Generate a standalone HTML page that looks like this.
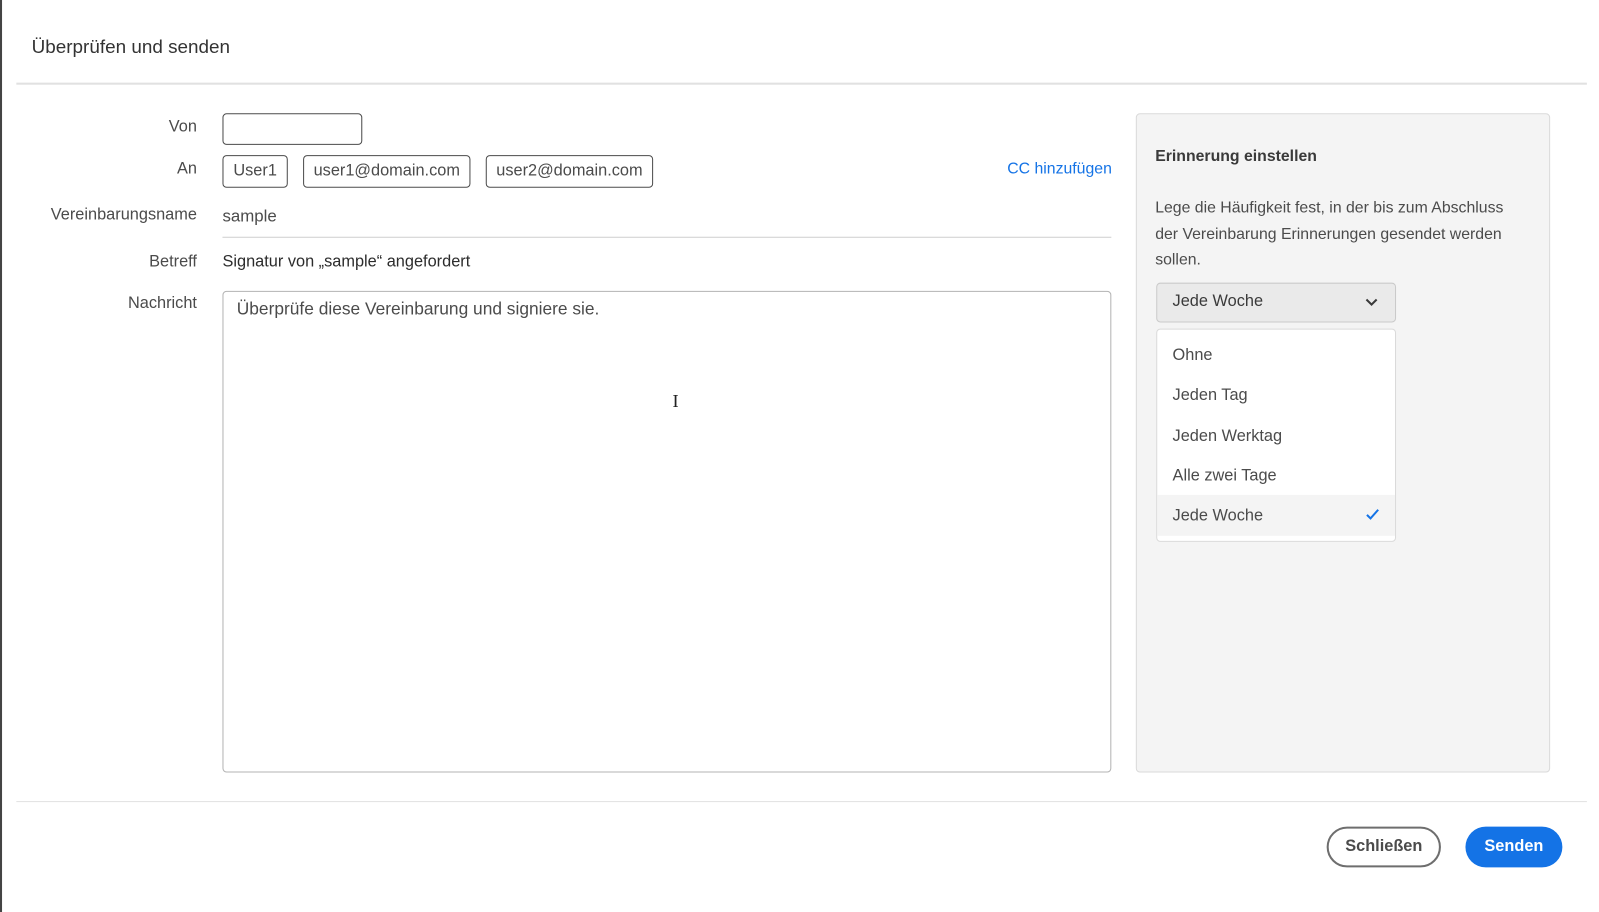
<!DOCTYPE html>
<html><head><meta charset="utf-8"><style>
*{box-sizing:border-box;margin:0;padding:0}
body{width:1599px;height:894px;background:#fff;font-family:"Liberation Sans",sans-serif;color:#4b4b4b;position:relative;overflow:hidden}
#w{position:absolute;left:0;top:0;width:1567px;height:876px;transform:scale(1.0205);transform-origin:0 0}
.a{position:absolute}
.lbl{position:absolute;right:1374px;font-size:16px;color:#4b4b4b;white-space:nowrap}
.chip{position:absolute;top:152px;height:32px;border:1px solid #4b4b4b;border-radius:4px;font-size:16px;line-height:30px;text-align:center;color:#4b4b4b}
.opt{position:absolute;left:15px;font-size:16px;color:#4b4b4b}
</style></head><body><div id="w">
<div class="a" style="left:0;top:0;width:2px;height:894px;background:#444"></div>
<div class="a" style="left:31px;top:35px;font-size:18.5px;color:#333">Überprüfen und senden</div>
<div class="a" style="left:16px;top:81px;width:1539px;height:2px;background:#e1e1e1"></div>

<div class="lbl" style="top:116px">Von</div>
<div class="a" style="left:218px;top:111px;width:137px;height:31px;border:1px solid #4b4b4b;border-radius:4px"></div>
<div class="lbl" style="top:157px">An</div>
<div class="chip" style="left:218px;width:64px">User1</div>
<div class="chip" style="left:297px;width:164px">user1@domain.com</div>
<div class="chip" style="left:476px;width:164px">user2@domain.com</div>
<div class="a" style="left:987px;top:157px;font-size:15.5px;color:#1473e6">CC hinzufügen</div>
<div class="lbl" style="top:202px">Vereinbarungsname</div>
<div class="a" style="left:218px;top:203px;font-size:16.5px;color:#4b4b4b">sample</div>
<div class="a" style="left:218px;top:232px;width:871px;height:1px;background:#cfcfcf"></div>
<div class="lbl" style="top:248px">Betreff</div>
<div class="a" style="left:218px;top:248px;font-size:16px;color:#2c2c2c">Signatur von „sample“ angefordert</div>
<div class="lbl" style="top:289px">Nachricht</div>
<div class="a" style="left:218px;top:285px;width:871px;height:472px;border:1px solid #b3b3b3;border-radius:4px"></div>
<div class="a" style="left:232px;top:293px;font-size:17px;color:#4b4b4b">Überprüfe diese Vereinbarung und signiere sie.</div>
<div class="a" style="left:659px;top:383px;font-size:18px;color:#222;font-family:'Liberation Serif',serif">I</div>

<div class="a" style="left:1113px;top:111px;width:406px;height:646px;background:#f4f4f4;border:1px solid #dadada;border-radius:4px"></div>
<div class="a" style="left:1132px;top:145px;font-size:15.5px;font-weight:bold;color:#3a3a3a">Erinnerung einstellen</div>
<div class="a" style="left:1132px;top:191px;font-size:15.5px;line-height:25.5px;color:#4b4b4b;white-space:nowrap">Lege die Häufigkeit fest, in der bis zum Abschluss<br>der Vereinbarung Erinnerungen gesendet werden<br>sollen.</div>
<div class="a" style="left:1133px;top:277px;width:235px;height:39px;background:#eaeaea;border:1px solid #cacaca;border-radius:4px">
<div class="a" style="left:15px;top:9px;font-size:16px;color:#3a3a3a">Jede Woche</div>
<svg class="a" style="left:203px;top:13px" width="14" height="10" viewBox="0 0 14 10"><path d="M2 2.5 L7 7.5 L12 2.5" fill="none" stroke="#3a3a3a" stroke-width="2"/></svg>
</div>
<div class="a" style="left:1133px;top:322px;width:235px;height:209px;background:#fff;border:1px solid #dadada;border-radius:4px">
<div class="opt" style="top:17px">Ohne</div>
<div class="opt" style="top:56px">Jeden Tag</div>
<div class="opt" style="top:96px">Jeden Werktag</div>
<div class="opt" style="top:135px">Alle zwei Tage</div>
<div class="a" style="left:0;top:162px;width:233px;height:40px;background:#f4f4f4"></div>
<div class="opt" style="top:174px">Jede Woche</div>
<svg class="a" style="left:204px;top:175px" width="14" height="12" viewBox="0 0 14 12"><path d="M1.5 6.5 L5 10 L12.5 1.5" fill="none" stroke="#1473e6" stroke-width="2"/></svg>
</div>

<div class="a" style="left:16px;top:785px;width:1539px;height:1px;background:#e1e1e1"></div>
<div class="a" style="left:1300px;top:810px;width:112px;height:40px;border:2px solid #6e6e6e;border-radius:20px;font-size:16px;font-weight:bold;color:#4b4b4b;text-align:center;line-height:36px">Schließen</div>
<div class="a" style="left:1436px;top:810px;width:95px;height:40px;background:#1473e6;border-radius:20px;font-size:16px;font-weight:bold;color:#fff;text-align:center;line-height:40px">Senden</div>
</div></body></html>
